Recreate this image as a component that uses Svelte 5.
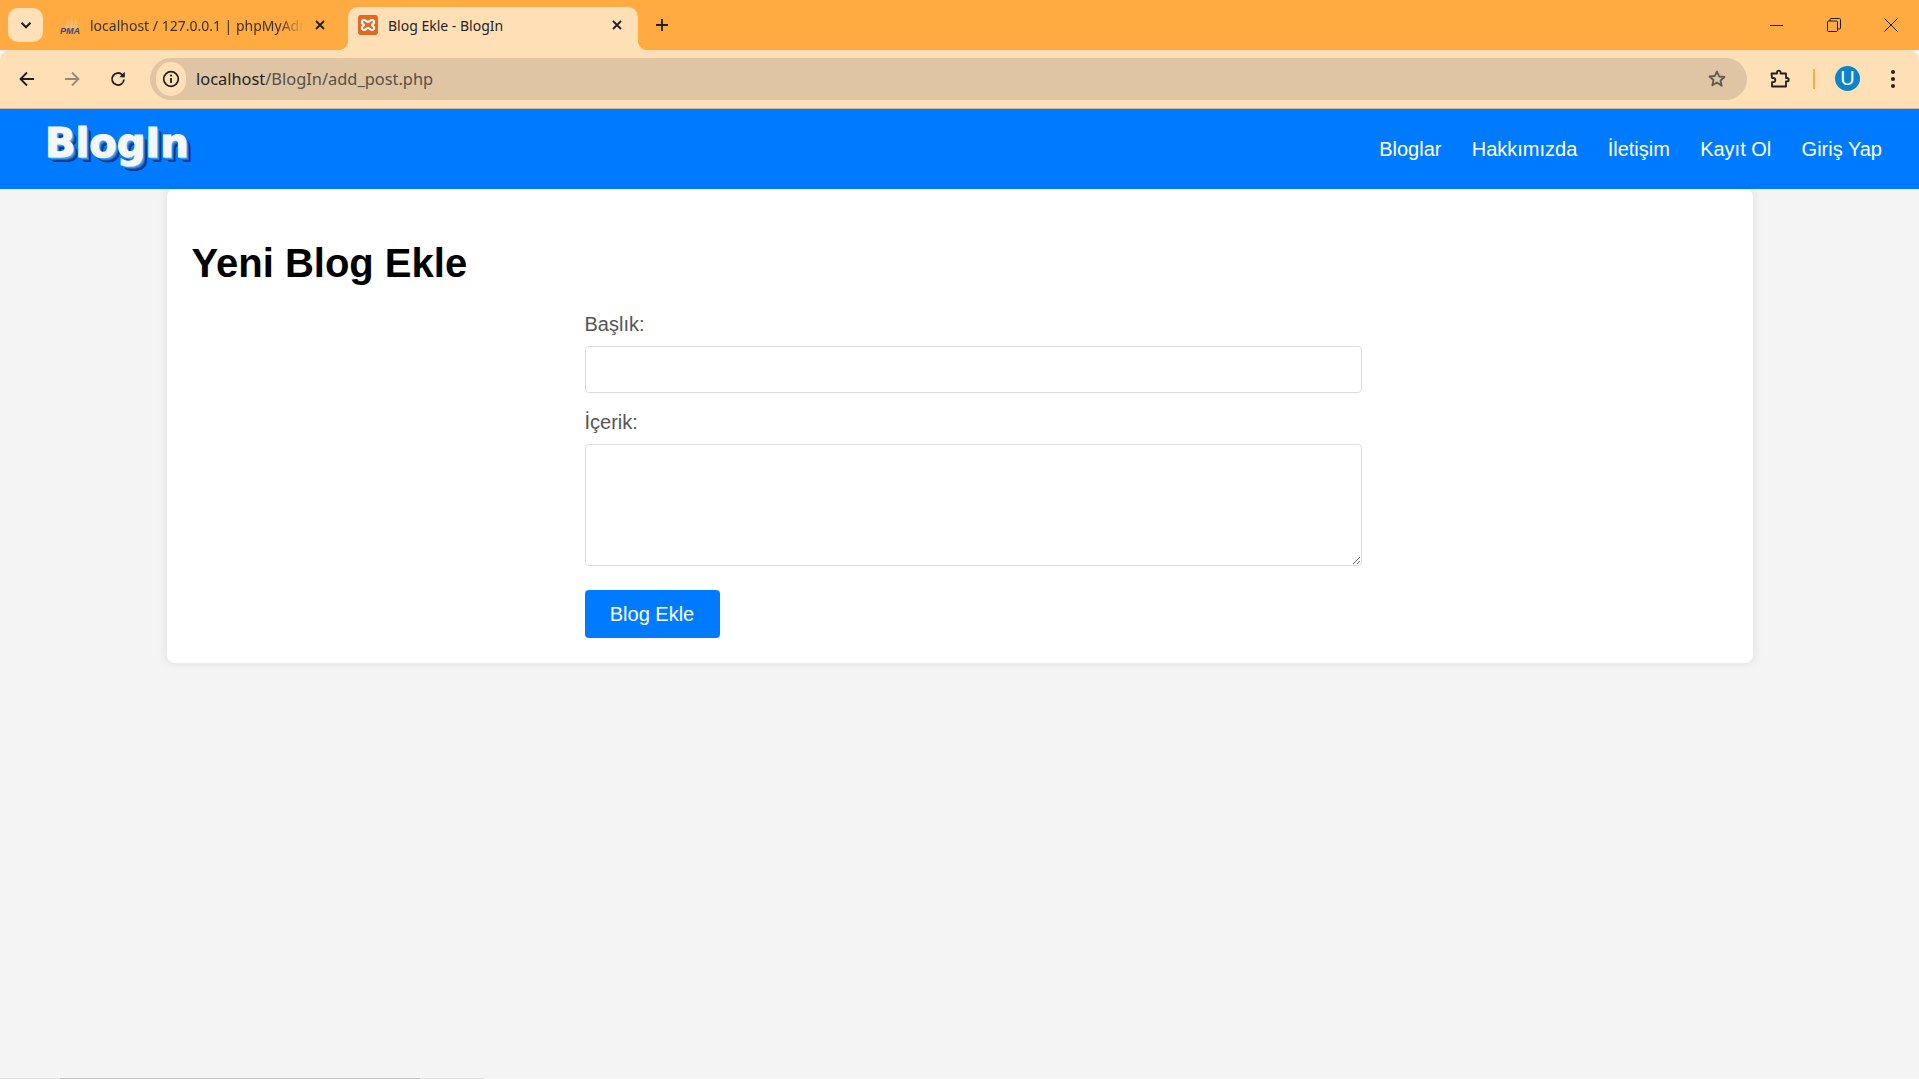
<script>
  const links = ["Bloglar", "Hakkımızda", "İletişim", "Kayıt Ol", "Giriş Yap"];
  let title = $state("");
  let content = $state("");
</script>

<div class="browser">
  <div class="tabstrip">
    <button class="tab-search" aria-label="Search tabs">
      <svg width="16" height="16" viewBox="0 0 16 16"><path d="M3.5 5.8 8 10.3l4.5-4.5" fill="none" stroke="#1f1f1f" stroke-width="2"/></svg>
    </button>
    <div class="tab">
      <svg class="favicon" width="22" height="20" viewBox="0 0 22 20">
        <path d="M6 13 9 3l1 10zM10 13l3-12 2 12zM14 13l3-10 2 10z" fill="#fbb968"/>
        <text x="1" y="19" class="pma">PMA</text>
      </svg>
      <span class="tab-title fade">localhost / 127.0.0.1 | phpMyAdmin</span>
      <svg class="close" width="12" height="12" viewBox="0 0 12 12"><path d="M2 2l8 8M10 2l-8 8" stroke="#1f1f1f" stroke-width="1.8"/></svg>
    </div>
    <div class="tab active">
      <svg class="favicon" width="20" height="20" viewBox="0 0 20 20">
        <rect width="20" height="20" rx="3" fill="#e2691f"/>
        <path d="M6 5c2 0 2.500 2 4 2s2-2 4-2 2.600 2 1.800 3.200S14 9.200 14 10s1 .7 1.800 1.800S16 15 14 15s-2.500-2-4-2-2 2-4 2-2.600-2-1.800-3.200S6 10.800 6 10s-1-.7-1.800-1.800S4 5 6 5z" fill="none" stroke="#fff" stroke-width="2.100" stroke-linejoin="round"/>
      </svg>
      <span class="tab-title">Blog Ekle - BlogIn</span>
      <svg class="close" width="12" height="12" viewBox="0 0 12 12"><path d="M2 2l8 8M10 2l-8 8" stroke="#1f1f1f" stroke-width="1.8"/></svg>
    </div>
    <button class="new-tab" aria-label="New tab">
      <svg width="14" height="14" viewBox="0 0 14 14"><path d="M7 1v12M1 7h12" stroke="#1f1f1f" stroke-width="1.800"/></svg>
    </button>
    <div class="window-controls">
      <button aria-label="Minimize"><svg width="14" height="14" viewBox="0 0 14 14"><path d="M0 7.500h13" stroke="#1f1f1f"/></svg></button>
      <button aria-label="Restore"><svg width="14" height="14" viewBox="0 0 14 14"><rect x=".5" y="3" width="10" height="10.500" rx="1" fill="none" stroke="#1f1f1f"/><path d="M3 3V1.500a1 1 0 0 1 1-1h8.500a1 1 0 0 1 1 1V10a1 1 0 0 1-1 1H10.500" fill="none" stroke="#1f1f1f"/></svg></button>
      <button aria-label="Close"><svg width="14" height="14" viewBox="0 0 14 14"><path d="M.5.500l13 13M13.500.500l-13 13" stroke="#1f1f1f"/></svg></button>
    </div>
  </div>

  <div class="toolbar">
    <button class="tool" aria-label="Back">
      <svg width="18" height="18" viewBox="0 0 18 18"><path d="M16 9H3M9 2.500 2.500 9 9 15.500" fill="none" stroke="#1f1f1f" stroke-width="1.800"/></svg>
    </button>
    <button class="tool" aria-label="Forward">
      <svg width="18" height="18" viewBox="0 0 18 18"><path d="M2 9h13M9 2.500 15.500 9 9 15.500" fill="none" stroke="#938a7c" stroke-width="1.800"/></svg>
    </button>
    <button class="tool reload" aria-label="Reload">
      <svg width="18" height="18" viewBox="0 0 18 18"><path d="M15 9.500a6 6 0 1 1-1.800-4.800L15 6.500" fill="none" stroke="#1f1f1f" stroke-width="1.800"/><path d="M15.800 1.800v5.500h-5.500z" fill="#1f1f1f"/></svg>
    </button>
    <div class="address">
      <span class="site-info">
        <svg width="18" height="18" viewBox="0 0 18 18"><circle cx="9" cy="9" r="7.300" fill="none" stroke="#1f1f1f" stroke-width="1.700"/><path d="M9 8v5" stroke="#1f1f1f" stroke-width="1.800"/><circle cx="9" cy="5.500" r="1.100" fill="#1f1f1f"/></svg>
      </span>
      <span class="url">localhost<span class="path">/BlogIn/add_post.php</span></span>
      <svg class="star" width="20" height="20" viewBox="0 0 20 20"><path d="M10 2.500l2.200 5 5.300.5-4 3.500 1.200 5.300L10 13.500l-4.700 2.800 1.200-5.300-4-3.500 5.300-.5z" fill="none" stroke="#5f5a52" stroke-width="1.800" stroke-linejoin="round"/></svg>
    </div>
    <button class="tool ext" aria-label="Extensions">
      <svg width="20" height="20" viewBox="0 0 20 20"><path d="M1.500 4.500H7V3.500a1.800 1.800 0 0 1 3.600 0v1H16V9h1a1.700 1.700 0 0 1 0 3.400h-1v5.100H2v-4.300h1.200a2 2 0 0 0 0-4.200H2z" fill="none" stroke="#1f1f1f" stroke-width="1.800" stroke-linejoin="round"/></svg>
    </button>
    <span class="divider"></span>
    <span class="avatar">U</span>
    <button class="tool dots" aria-label="Menu">
      <svg width="6" height="20" viewBox="0 0 6 20"><circle cx="3" cy="3" r="2" fill="#1f1f1f"/><circle cx="3" cy="10" r="2" fill="#1f1f1f"/><circle cx="3" cy="17" r="2" fill="#1f1f1f"/></svg>
    </button>
  </div>
</div>

<header class="site-nav">
  <span class="logo">BlogIn</span>
  <nav>
    {#each links as link}
      <a href="#top">{link}</a>
    {/each}
  </nav>
</header>

<main class="card">
  <h1>Yeni Blog Ekle</h1>
  <form class="post-form" onsubmit={(e) => e.preventDefault()}>
    <label for="title">Başlık:</label>
    <input id="title" type="text" bind:value={title} />
    <label for="content">İçerik:</label>
    <textarea id="content" bind:value={content}></textarea>
    <button class="submit" type="submit">Blog Ekle</button>
  </form>
</main>

<div class="page-rest"></div>
<div class="bottom-line"></div>

<style>
  :global(body) {
    background: #f4f4f4;
    font-family: "Liberation Sans", Arial, sans-serif;
  }
  :global(#app) {
    display: flex;
    flex-direction: column;
    height: 1079px;
    overflow: hidden;
  }

  button {
    border: 0;
    background: none;
    padding: 0;
    display: flex;
    align-items: center;
    justify-content: center;
  }

  /* --- Browser chrome --- */
  .browser {
    flex-shrink: 0;
    font-family: "Noto Sans", "Open Sans", sans-serif;
    color: #1f1f1f;
  }

  .tabstrip {
    height: 50px;
    background: #ffab42;
    display: flex;
    align-items: flex-end;
    padding-left: 8px;
    box-sizing: border-box;
  }
  .tab-search {
    width: 35px;
    height: 34px;
    margin-bottom: 8px;
    background: #ffe0b8;
    border-radius: 10px;
  }
  .tab {
    height: 43px;
    padding-bottom: 7px;
    display: flex;
    align-items: center;
    box-sizing: border-box;
    position: relative;
  }
  .tab:not(.active) {
    width: 305px;
    padding-left: 16px;
  }
  .tab:not(.active) .tab-title {
    width: 214px;
    margin-left: 9px;
    color: #3c3226;
  }
  .tab:not(.active) .close {
    margin-left: 10px;
  }
  .tab.active {
    width: 290px;
    padding-left: 10px;
    background: #ffdfb6;
    border-radius: 10px 10px 0 0;
  }
  .tab.active::before,
  .tab.active::after {
    content: "";
    position: absolute;
    bottom: 0;
    width: 10px;
    height: 10px;
  }
  .tab.active::before {
    left: -10px;
    background: radial-gradient(circle at 0 0, transparent 10px, #ffdfb6 10.5px);
  }
  .tab.active::after {
    right: -10px;
    background: radial-gradient(circle at 100% 0, transparent 10px, #ffdfb6 10.5px);
  }
  .tab.active .tab-title {
    width: 223px;
    margin-left: 10px;
  }
  .tab-title {
    font-size: 14px;
    white-space: nowrap;
    overflow: hidden;
  }
  .fade {
    mask-image: linear-gradient(to right, #000 88%, transparent 100%);
  }
  .pma {
    font-family: "Liberation Sans", sans-serif;
    font-size: 9px;
    font-weight: 700;
    font-style: italic;
    fill: #2f4f8f;
  }
  .new-tab {
    width: 30px;
    height: 30px;
    margin: 0 0 10px 9px;
  }
  .window-controls {
    margin-left: auto;
    display: flex;
    align-self: stretch;
  }
  .window-controls button {
    width: 57px;
    height: 49px;
  }

  .toolbar {
    height: 59px;
    box-sizing: border-box;
    background: #ffdfb6;
    border-bottom: 1px solid #c9b89f;
    border-radius: 10px 10px 0 0;
    display: flex;
    align-items: center;
    padding: 0 8px 1px 9px;
  }
  .tool {
    width: 36px;
    height: 36px;
    flex-shrink: 0;
    margin-right: 9px;
  }
  .reload {
    margin-left: 1px;
    margin-right: 14px;
  }
  .address {
    flex: 1;
    height: 42px;
    background: #dfc5a3;
    border-radius: 21px;
    display: flex;
    align-items: center;
    padding: 0 20px 0 6px;
  }
  .site-info {
    width: 30px;
    height: 34px;
    border-radius: 17px;
    background: #ffdfb6;
    display: flex;
    align-items: center;
    justify-content: center;
  }
  .url {
    margin-left: 10px;
    font-size: 16.4px;
    color: #1f1f1f;
  }
  .path {
    color: #55504a;
  }
  .star {
    margin-left: auto;
  }
  .ext {
    margin: 0 0 0 15px;
  }
  .divider {
    width: 2px;
    height: 20px;
    background: #ffab42;
    margin-left: 15px;
  }
  .avatar {
    width: 25px;
    height: 25px;
    border-radius: 50%;
    background: #0b84c9;
    color: #fff;
    font: 20px/25px "Liberation Sans", sans-serif;
    text-align: center;
    margin-left: 20px;
  }
  .dots {
    margin: 0 0 0 15px;
  }

  /* --- Site header --- */
  .site-nav {
    flex-shrink: 0;
    height: 80px;
    background: #007bff;
    display: flex;
    align-items: center;
    justify-content: space-between;
    padding: 0 37px 0 45px;
  }
  .logo {
    font-family: "DejaVu Sans", sans-serif;
    font-weight: 700;
    font-size: 40px;
    color: #f5f6f8;
    margin-top: -12px;
    -webkit-text-stroke: 1.2px #f5f6f8;
    text-shadow:
      1px 1px 0 #5db3ea,
      2px 2px 0 #3a9fe2,
      3px 3px 0 #1f6fc4,
      4px 4px 0 #0b3f9c,
      5px 5px 0 #0a3690;
  }
  nav {
    display: flex;
    gap: 30.3px;
  }
  nav a {
    color: #fff;
    font-size: 20px;
    text-decoration: none;
  }

  /* --- Form card --- */
  .card {
    flex-shrink: 0;
    position: relative;
    width: 1586px;
    margin: 0 auto;
    box-sizing: border-box;
    padding: 25px;
    background: #fff;
    border-radius: 8px;
    box-shadow: 0 0 10px rgba(0, 0, 0, 0.1);
  }
  h1 {
    margin: 27px 0;
    font-size: 40px;
    color: #000;
  }
  .post-form {
    width: 777px;
    margin-left: 393px;
  }
  label {
    display: block;
    font-size: 20px;
    color: #555;
    margin-bottom: 10px;
  }
  input,
  textarea {
    display: block;
    width: 100%;
    box-sizing: border-box;
    border: 1px solid #ddd;
    border-radius: 4px;
    background: #fff;
    outline: none;
  }
  input {
    height: 47px;
    margin-bottom: 18px;
  }
  textarea {
    height: 122px;
  }
  .submit {
    width: 135px;
    height: 48px;
    margin-top: 24px;
    background: #007bff;
    color: #fff;
    font-family: "Liberation Sans", Arial, sans-serif;
    font-size: 20px;
    border-radius: 4px;
  }

  .page-rest {
    flex: 1;
  }
  .bottom-line {
    flex-shrink: 0;
    height: 1px;
    background: linear-gradient(to right, #e0e0e0 60px, #c4c4c4 60px, #c4c4c4 420px, #e0e0e0 420px, #e0e0e0 484px, #f8f8f8 484px);
  }
</style>
